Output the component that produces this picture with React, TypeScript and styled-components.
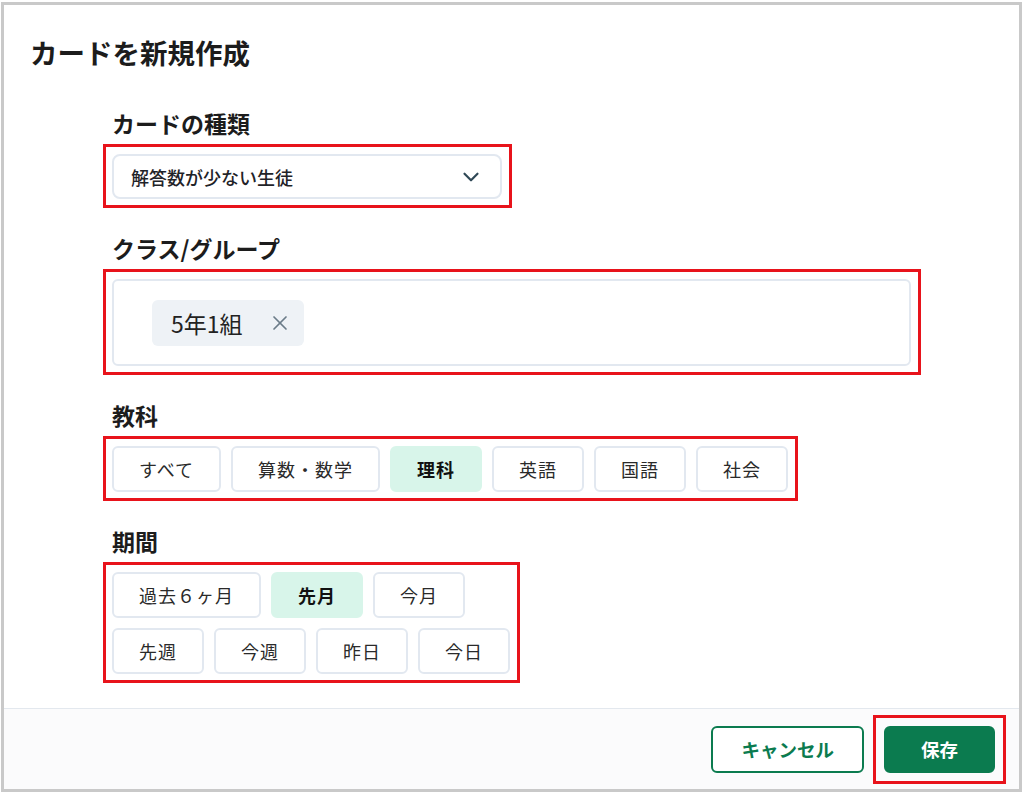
import React from "react";
import styled, { createGlobalStyle } from "styled-components";
import { ChevronDown, X } from "lucide-react";

const GlobalStyle = createGlobalStyle`
  html, body {
    margin: 0;
    padding: 0;
    background: #ffffff;
  }
  body {
    font-family: "Noto Sans CJK JP", "Noto Sans", "Liberation Sans", sans-serif;
    color: #1c1c1c;
  }
  * { box-sizing: border-box; }
`;

const Frame = styled.div`
  width: 1021px;
  height: 790px;
  margin: 2px 0 0 1px;
  border: 3px solid #c9c9c9;
  background: #ffffff;
  display: flex;
  flex-direction: column;
  overflow: hidden;
`;

const Body = styled.div`
  flex: 1;
  min-height: 0;
  padding: 29px 26px 0;
  display: flex;
  flex-direction: column;
`;

const Title = styled.h1`
  margin: 0;
  font-size: 27.5px;
  line-height: 36px;
  font-weight: 700;
  color: #1c1c1c;
`;

const Form = styled.div`
  margin: 38px 0 0 73px;
  display: flex;
  flex-direction: column;
  gap: 25px;
`;

const Section = styled.section`
  display: flex;
  flex-direction: column;
  align-items: flex-start;
  gap: 6px;
`;

const Label = styled.h2`
  margin: 0;
  padding-left: 9px;
  font-size: 23px;
  line-height: 30px;
  font-weight: 700;
  color: #1c1c1c;
`;

const Highlight = styled.div`
  border: 3px solid #e8131b;
  padding: 7px 7px 6px 6px;
  display: inline-flex;
`;

const Select = styled.div`
  width: 390px;
  height: 45px;
  border: 2px solid #e2e8f0;
  border-radius: 8px;
  padding: 0 16px 0 17px;
  display: flex;
  align-items: center;
  justify-content: space-between;
  font-size: 18px;
  font-weight: 500;
  color: #1f2328;
`;

const TagBox = styled.div`
  width: 799px;
  height: 87px;
  border: 2px solid #e2e8f0;
  border-radius: 6px;
  padding: 19px 38px;
  display: flex;
  align-items: flex-start;
`;

const Chip = styled.div`
  height: 46px;
  padding: 0 12px 0 19px;
  border-radius: 6px;
  background: #eef2f6;
  display: flex;
  align-items: center;
  gap: 25px;
  font-size: 23px;
  color: #222;
  svg {
    color: #6b7c88;
  }
`;

const Options = styled.div<{ $width?: number }>`
  display: flex;
  flex-wrap: wrap;
  gap: 10px;
  width: ${(p) => (p.$width ? `${p.$width}px` : "auto")};
`;

const Option = styled.button<{ $active?: boolean }>`
  height: 46px;
  padding: 0 25px;
  border: 2px solid ${(p) => (p.$active ? "#d8f5ea" : "#e2e8f0")};
  background: ${(p) => (p.$active ? "#d8f5ea" : "#ffffff")};
  border-radius: 6px;
  font-family: inherit;
  font-size: 18px;
  letter-spacing: 1px;
  font-weight: ${(p) => (p.$active ? 700 : 400)};
  color: ${(p) => (p.$active ? "#111" : "#2a2a2a")};
  white-space: nowrap;
  cursor: pointer;
`;

const Footer = styled.footer`
  flex: none;
  height: 81px;
  border-top: 1px solid #e3e8ee;
  background: #fbfbfc;
  display: flex;
  align-items: center;
  justify-content: flex-end;
  gap: 9px;
  padding: 0 13px 0 0;
`;

const SaveHighlight = styled.div`
  border: 3px solid #e8131b;
  padding: 8px;
  display: inline-flex;
`;

const FooterButton = styled.button<{ $primary?: boolean }>`
  height: 47px;
  padding: 0 ${(p) => (p.$primary ? 35 : 28)}px;
  border: 2px solid #0b7b4f;
  border-radius: 6px;
  background: ${(p) => (p.$primary ? "#0b7b4f" : "#ffffff")};
  color: ${(p) => (p.$primary ? "#ffffff" : "#0b7b4f")};
  font-family: inherit;
  font-size: 18.5px;
  font-weight: 700;
  cursor: pointer;
`;

const subjects = ["すべて", "算数・数学", "理科", "英語", "国語", "社会"];
const periods = ["過去６ヶ月", "先月", "今月", "先週", "今週", "昨日", "今日"];

export default function App() {
  return (
    <>
      <GlobalStyle />
      <Frame>
        <Body>
          <Title>カードを新規作成</Title>
          <Form>
            <Section>
              <Label>カードの種類</Label>
              <Highlight>
                <Select>
                  <span>解答数が少ない生徒</span>
                  <ChevronDown size={26} strokeWidth={2} color="#2f4856" />
                </Select>
              </Highlight>
            </Section>
            <Section>
              <Label>クラス/グループ</Label>
              <Highlight>
                <TagBox>
                  <Chip>
                    <span>5年1組</span>
                    <X size={24} strokeWidth={1.7} />
                  </Chip>
                </TagBox>
              </Highlight>
            </Section>
            <Section>
              <Label>教科</Label>
              <Highlight>
                <Options>
                  {subjects.map((s) => (
                    <Option key={s} $active={s === "理科"}>
                      {s}
                    </Option>
                  ))}
                </Options>
              </Highlight>
            </Section>
            <Section>
              <Label>期間</Label>
              <Highlight>
                <Options $width={398}>
                  {periods.map((s) => (
                    <Option key={s} $active={s === "先月"}>
                      {s}
                    </Option>
                  ))}
                </Options>
              </Highlight>
            </Section>
          </Form>
        </Body>
        <Footer>
          <FooterButton>キャンセル</FooterButton>
          <SaveHighlight>
            <FooterButton $primary>保存</FooterButton>
          </SaveHighlight>
        </Footer>
      </Frame>
    </>
  );
}
